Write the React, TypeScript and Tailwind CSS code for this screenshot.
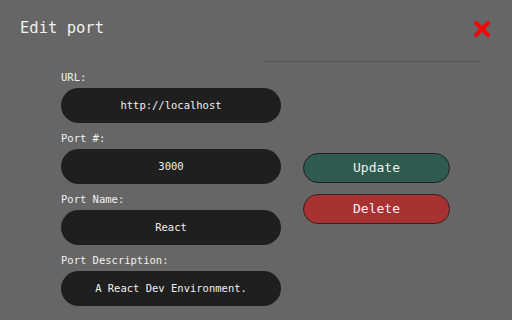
import { X } from 'lucide-react'

const fields = [
  { label: 'URL:', value: 'http://localhost' },
  { label: 'Port #:', value: '3000' },
  { label: 'Port Name:', value: 'React' },
  { label: 'Port Description:', value: 'A React Dev Environment.' },
]

const App = () => {
  return (
    <div
      className="flex h-[320px] w-[512px] flex-col overflow-hidden bg-[#666666] text-[#f0f0f0]"
      style={{ fontFamily: '"DejaVu Sans Mono", monospace' }}
    >
      <header className="flex h-[56px] items-center justify-between pl-[20px] pr-[18px] pt-[2px]">
        <h1 className="text-[15.5px]">Edit port</h1>
        <button className="text-[#ff0000]">
          <X size={24} strokeWidth={4} />
        </button>
      </header>
      <div className="ml-[262px] mr-[31px] mt-[5px] h-px bg-[#585858]" />

      <div className="flex gap-[22px] pl-[61px] pt-[9px]">
        <div className="flex w-[220px] flex-col gap-[9px]">
          {fields.map((f) => (
            <div key={f.label} className="flex flex-col">
              <label className="mb-[4px] text-[10.5px] leading-[13px]">{f.label}</label>
              <div className="flex h-[35px] items-center justify-center rounded-full bg-[#1f1f1f] text-[10.5px] font-medium">
                {f.value}
              </div>
            </div>
          ))}
        </div>
        <div className="flex w-[147px] flex-col gap-[11px] pt-[82px]">
          <button className="h-[30px] rounded-full border border-[#222] bg-[#2f5a4e] text-[13px]">
            Update
          </button>
          <button className="h-[30px] rounded-full border border-[#3a2020] bg-[#a83232] text-[13px]">
            Delete
          </button>
        </div>
      </div>
    </div>
  )
}

export default App
